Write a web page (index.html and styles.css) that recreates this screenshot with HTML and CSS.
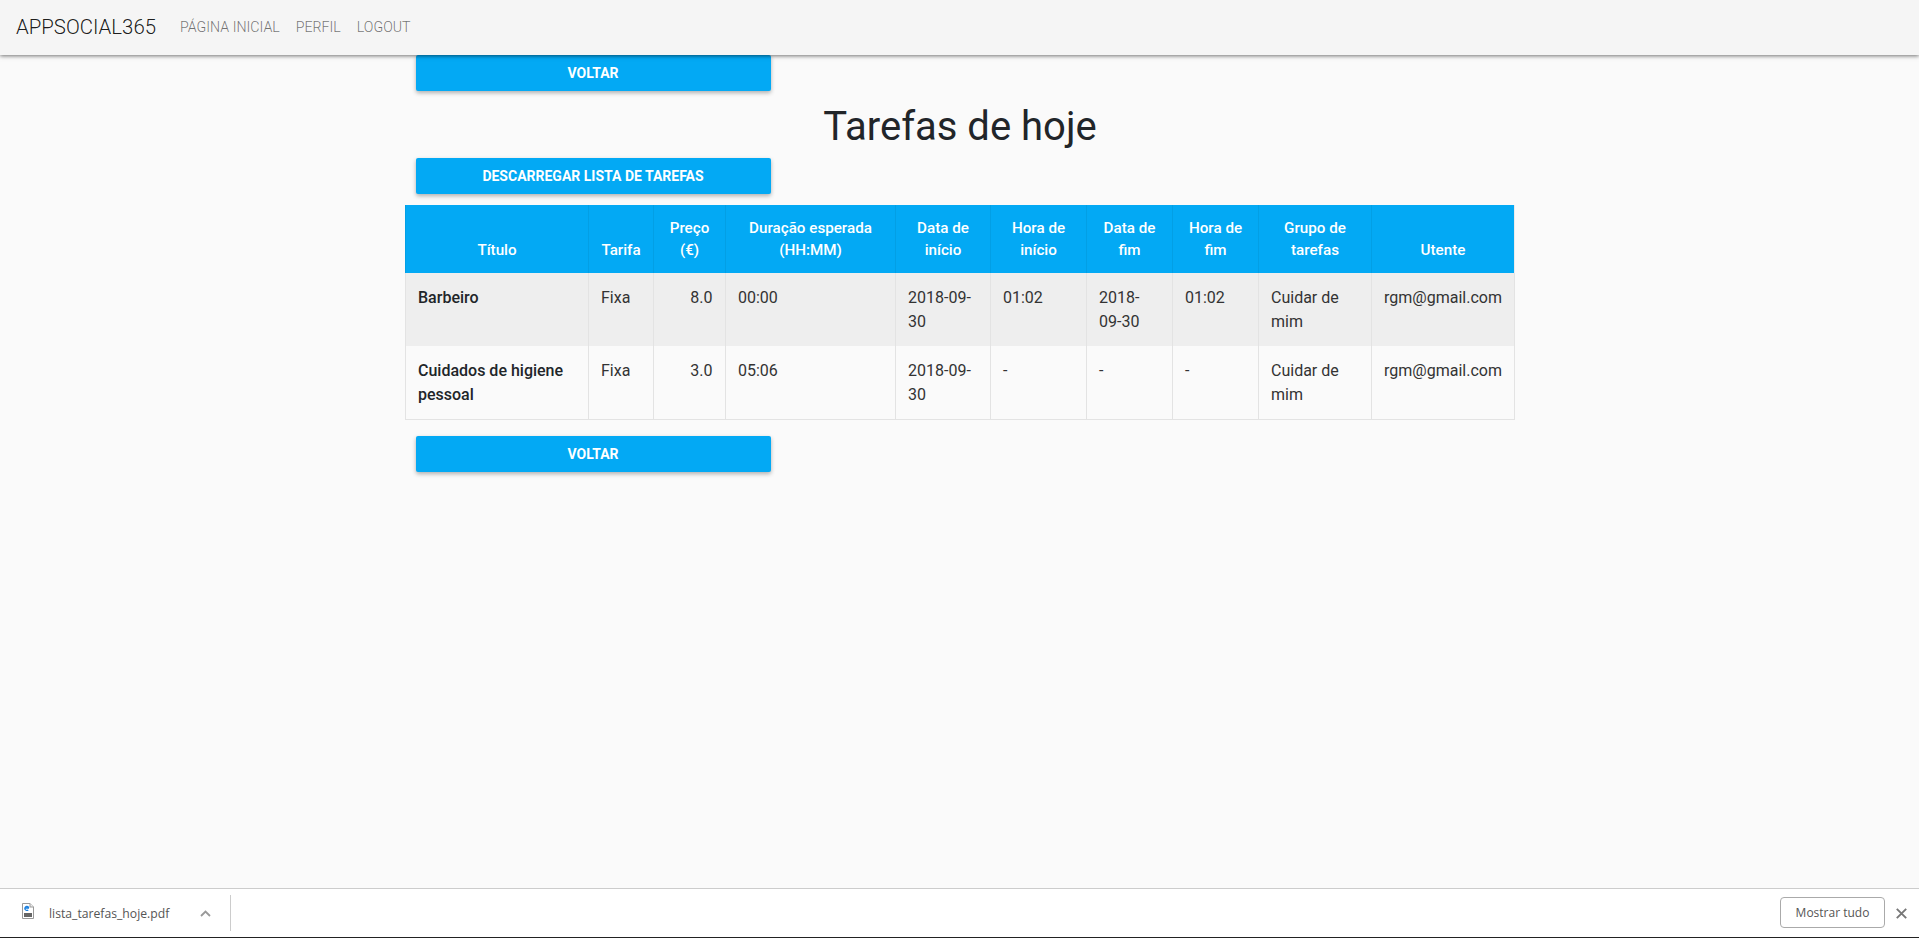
FILE: index.html
```html
<!DOCTYPE html>
<html lang="pt">
<head>
<meta charset="utf-8">
<title>Tarefas de hoje</title>
<link rel="stylesheet" href="styles.css">
</head>
<body>
<div class="page">
  <nav class="navbar">
    <a class="brand">APPSOCIAL365</a>
    <a class="nav-link">PÁGINA INICIAL</a>
    <a class="nav-link">PERFIL</a>
    <a class="nav-link">LOGOUT</a>
  </nav>
  <main class="container">
    <div class="btn-row"><a class="btn">VOLTAR</a></div>
    <h1 class="title">Tarefas de hoje</h1>
    <div class="btn-row"><a class="btn">DESCARREGAR LISTA DE TAREFAS</a></div>
    <table class="tasks">
      <colgroup>
        <col class="c1"><col class="c2"><col class="c3"><col class="c4"><col class="c5">
        <col class="c6"><col class="c7"><col class="c8"><col class="c9"><col class="c10">
      </colgroup>
      <thead>
        <tr>
          <th>Título</th><th>Tarifa</th><th>Preço (€)</th><th>Duração esperada (HH:MM)</th><th>Data de início</th>
          <th>Hora de início</th><th>Data de fim</th><th>Hora de fim</th><th>Grupo de tarefas</th><th>Utente</th>
        </tr>
      </thead>
      <tbody>
        <tr class="odd">
          <td class="strong">Barbeiro</td><td>Fixa</td><td class="num">8.0</td><td>00:00</td><td>2018-09-30</td>
          <td>01:02</td><td>2018-09-30</td><td>01:02</td><td>Cuidar de mim</td><td>rgm@gmail.com</td>
        </tr>
        <tr>
          <td class="strong">Cuidados de higiene pessoal</td><td>Fixa</td><td class="num">3.0</td><td>05:06</td><td>2018-09-30</td>
          <td>-</td><td>-</td><td>-</td><td>Cuidar de mim</td><td>rgm@gmail.com</td>
        </tr>
      </tbody>
    </table>
    <div class="btn-row btn-row-bottom"><a class="btn">VOLTAR</a></div>
  </main>
  <footer class="downloads">
    <div class="file">
      <svg class="file-icon" width="12" height="16" viewBox="0 0 12 16">
        <path d="M.5.5h7.5l3.5 3.5v11.5H.5z" fill="#fff" stroke="#999"/>
        <path d="M8 .5V4h3.5" fill="#eee" stroke="#999"/>
        <path d="M3 5h4M6.8 5a2 2 0 1 0-.6 1.9" fill="none" stroke="#1a80e0" stroke-width="1.3"/>
        <path d="M2 10h8v4H2z" fill="#666"/>
      </svg>
      <span class="file-name">lista_tarefas_hoje.pdf</span>
      <svg class="chevron" width="11" height="7" viewBox="0 0 11 7"><path d="M1 6l4.5-4.5L10 6" fill="none" stroke="#999" stroke-width="1.8"/></svg>
    </div>
    <div class="sep"></div>
    <div class="spacer"></div>
    <a class="show-all">Mostrar tudo</a>
    <svg class="close" width="11" height="11" viewBox="0 0 11 11"><path d="M.8.8l9.4 9.4M10.2.8L.8 10.2" fill="none" stroke="#777" stroke-width="1.9"/></svg>
  </footer>
</div>
</body>
</html>
```
FILE: styles.css
```css
* { box-sizing: border-box; }
html, body { margin: 0; height: 100%; overflow: hidden; }
body { background: #fafafa; font-family: Roboto, sans-serif; color: #212529; }
.page { height: 938px; display: flex; flex-direction: column; }

.navbar {
  flex: 0 0 55px; display: flex; align-items: center; gap: 16px; padding: 0 16px 2px;
  background: #f5f5f5; box-shadow: 0 1px 4px rgba(0,0,0,.55); position: relative; z-index: 2;
}
.brand { font-size: 20.4px; font-weight: 300; color: rgba(0,0,0,.9); margin-right: 8px; }
.nav-link { font-size: 14.2px; font-weight: 300; color: rgba(0,0,0,.55); }

.container { flex: 1; width: 1110px; margin: 0 auto; }
.btn-row { padding: 0 11px; }
.btn-row-bottom { margin-top: 16px; }
.btn {
  display: block; width: 355px; height: 36px; line-height: 36px; text-align: center;
  background: #03a9f4; color: #fff; font-size: 14px; font-weight: 700; border-radius: 2px;
  box-shadow: 0 2px 4px rgba(0,0,0,.3);
}
.title { margin: 0; height: 67px; line-height: 72px; text-align: center; font-size: 40px; font-weight: 400; color: #212529; padding-left: 1px; }

.tasks { width: 1109px; margin-top: 11px; table-layout: fixed; border-collapse: collapse; font-size: 16px; line-height: 24px; }
.c1 { width: 183px; } .c2 { width: 65px; } .c3 { width: 72px; } .c4 { width: 170px; } .c5 { width: 95px; }
.c6 { width: 96px; } .c7 { width: 86px; } .c8 { width: 86px; } .c9 { width: 113px; } .c10 { width: 143px; }
.tasks th {
  background: #03a9f4; color: #fff; font-size: 15.2px; line-height: 22px; font-weight: 500;
  padding: 12px 11.5px 12px 12.5px; vertical-align: bottom; text-align: center; border: 1px solid rgba(0,0,0,.06); border-top: 0; border-bottom: 0;
}
.tasks td { padding: 13px 12px 12px 12.5px; vertical-align: top; border: 1px solid #e3e3e3; border-top: 0; color: #333; }
.tasks .odd td { background: #eeeeee; border-bottom: 0; }
.tasks .strong { font-weight: 500; color: #212529; }
.tasks .num { text-align: right; }

.downloads {
  flex: 0 0 50px; display: flex; align-items: center; background: #fff;
  border-top: 1px solid #ccc; border-bottom: 1px solid #222; font-family: "Open Sans", sans-serif;
}
.file { display: flex; align-items: center; width: 230px; padding-left: 22px; }
.file-icon { margin-top: -5px; }
.file-name { margin-left: 15px; font-size: 12.2px; color: #555; width: 151px; }
.chevron { margin-left: 0; }
.sep { width: 1px; height: 36px; background: #ccc; }
.spacer { flex: 1; }
.show-all {
  width: 105px; height: 31px; line-height: 29px; margin-bottom: 2px; text-align: center; border: 1px solid #aaa; border-radius: 4px;
  font-size: 12px; font-weight: 500; color: #555;
}
.close { margin: 0 12px 0 11px; }
```
